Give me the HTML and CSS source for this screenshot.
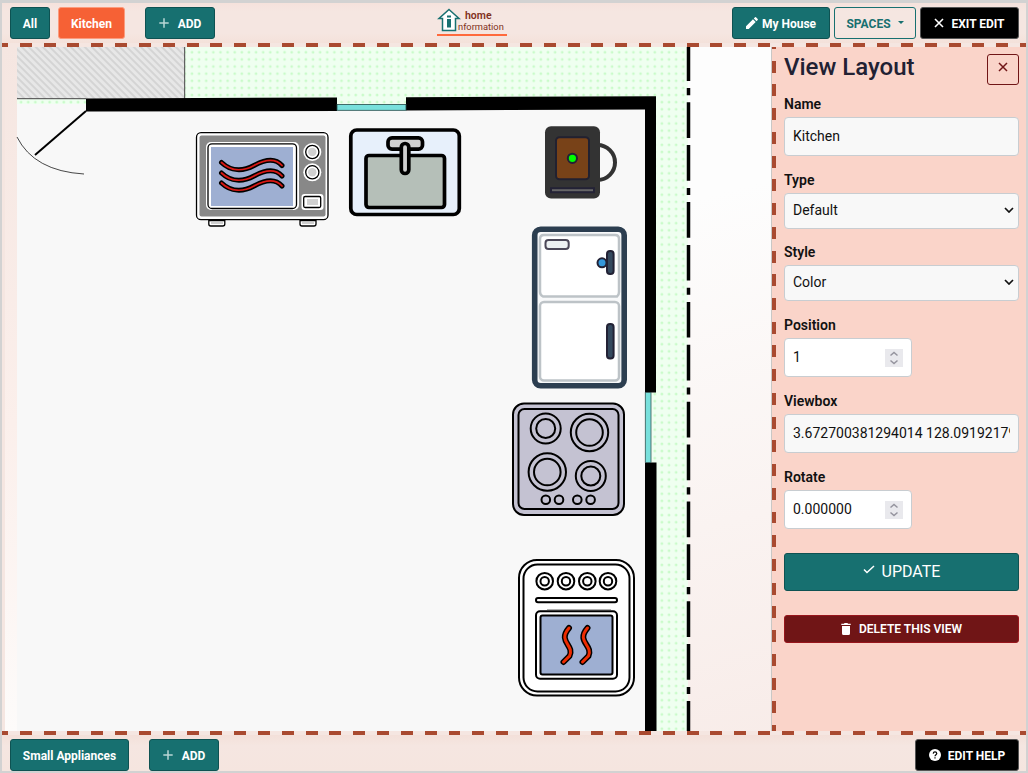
FILE: index.html
```html
<!DOCTYPE html>
<html lang="en">
<head>
<meta charset="utf-8">
<title>Home Information</title>
<link rel="stylesheet" href="styles.css">
</head>
<body>
<div class="app">
  <header class="bar top">
    <nav class="group">
      <button class="btn teal">All</button>
      <button class="btn orange">Kitchen</button>
      <button class="btn teal add"><svg width="10" height="10" viewBox="0 0 10 10"><path d="M5 .3v9.4M.3 5h9.4" stroke="#b9d6d5" stroke-width="1.5"/></svg>ADD</button>
    </nav>
    <div class="logo">
      <svg width="24" height="24" viewBox="0 0 24 24"><path d="M12 1.500 22 10.500H18.500V22.500H5.500V10.500H2Z" fill="#fff" stroke="#177070" stroke-width="1.500"/><path d="M10 7.500h4v2h-4zM10 11h4v8.500h-4z" fill="#177070"/></svg>
      <div class="words"><b>home</b><span>nformation</span></div>
    </div>
    <div class="group right">
      <button class="btn teal house"><svg width="12" height="12" viewBox="0 0 12 12"><path d="M0 12V9.300L7 2.300 9.700 5 2.700 12ZM7.800 1.500 9 .3Q9.500-.1 10 .3L11.700 2Q12.100 2.500 11.700 3L10.500 4.200Z" fill="#fff"/></svg>My House</button>
      <button class="btn outline">SPACES<i class="caret"></i></button>
      <button class="btn black exit"><svg width="10" height="10" viewBox="0 0 10 10"><path d="m1 1 8 8M9 1 1 9" stroke="#fff" stroke-width="1.600"/></svg>EXIT EDIT</button>
    </div>
  </header>
  <div class="dash"></div>
  <div class="middle">
    <main class="canvas">
      <svg width="769" height="684" viewBox="2 47 769 684">
        <defs>
          <pattern id="grass" x="188.500" y="48.700" width="7.120" height="7.120" patternUnits="userSpaceOnUse"><rect width="8" height="8" fill="#effff0"/><circle cx="3.500" cy="3.500" r="1.350" fill="#c9fbc9"/></pattern>
          <pattern id="hatch" width="4.950" height="4.950" patternUnits="userSpaceOnUse" patternTransform="rotate(-45)"><rect width="5" height="5" fill="#e7e7e7"/><path d="M2 0V5" stroke="#bdbdbd" stroke-width=".9"/></pattern>
          <linearGradient id="side" x1="690" y1="200" x2="850" y2="820" gradientUnits="userSpaceOnUse"><stop offset="0" stop-color="#fdfdfd"/><stop offset="1" stop-color="#f7e9e5"/></linearGradient>
        </defs>
        <rect x="688" y="47" width="83" height="684" fill="url(#side)"/>
        <rect x="17" y="47" width="671" height="684" fill="url(#grass)"/>
        <rect x="17" y="47" width="168" height="52" fill="url(#hatch)"/>
        <path d="M184.700 47V99M17 98.700H86" stroke="#444" fill="none"/>
        <path d="M17 104H86L645 105V731H17Z" fill="#f8f8f8"/>
        <path d="M86 98.500 337 97.500V111L86 111.500ZM406 97.200 656 96.300V392.500H645V109.500L406 110.500ZM645 462.500H656.500V731H645Z" fill="#000"/>
        <path d="M337 96h69v9h-69z" fill="url(#grass)"/>
        <rect x="337" y="104.500" width="69" height="5.800" fill="#78e0dc" stroke="#234b49" stroke-width=".8"/>
        <rect x="645.300" y="392.500" width="5.700" height="70" fill="#78e0dc" stroke="#355" stroke-width=".8"/>
        <path d="M688.500 47V731" stroke="#000" stroke-width="3.500" stroke-dasharray="35.700 7.100 7.100 7.100 35.700 7.100" stroke-dashoffset="1.700" class="fence"/>
        <path d="M86 111 35 155" stroke="#000" stroke-width="2"/><path d="M17 137Q34 171 84 174" stroke="#333" stroke-width=".9" fill="none"/>

        <g class="microwave" stroke="#000" stroke-width="1.300">
          <rect x="195" y="131" width="135" height="90" rx="6" fill="#fff" stroke="none"/>
          <rect x="196.500" y="132.700" width="131.500" height="87" rx="4.500" fill="#fff"/>
          <rect x="199.500" y="135.500" width="126" height="81" rx="2" fill="#888" stroke="none"/>
          <rect x="206" y="142" width="93" height="68" rx="5" fill="#fff" stroke="none"/>
          <rect x="208" y="143.800" width="88.500" height="64.700" rx="4" fill="#fff"/>
          <rect x="211" y="147" width="82" height="59" fill="#9eafd2" stroke="none"/>
          <g fill="#fff"><circle cx="312.300" cy="152" r="9" stroke="none"/><circle cx="312.300" cy="152" r="6.600"/><circle cx="312.300" cy="172.300" r="9" stroke="none"/><circle cx="312.300" cy="172.300" r="6.600"/><rect x="301.500" y="194" width="22" height="16" rx="3" stroke="none"/><rect x="303.700" y="196.500" width="17" height="11" rx="1.500"/><path d="M208.800 220.500h16v3.500q0 2-2 2h-12q-2 0-2-2ZM300 220.500h16v3.500q0 2-2 2h-12q-2 0-2-2Z"/></g>
          <g fill="#d0d0d0" stroke="none"><circle cx="312.300" cy="152" r="4.200"/><circle cx="312.300" cy="172.300" r="4.200"/><path d="M307 199h11v6h-11zM211 222h12v2h-12zM302 222h12v2h-12z"/></g>
          <g fill="none" stroke-linecap="round"><g stroke-width="5"><path d="M221.500 162.500C231 171.500 243 171.500 254 165.500S275 157.500 282 165.500"/><path d="M221.500 173C231 182 243 182 254 176S275 168 282 176"/><path d="M221.500 183C231 192 243 192 254 186S275 178 282 186"/></g><g stroke="#d81814" stroke-width="1.800"><path d="M221.500 162.500C231 171.500 243 171.500 254 165.500S275 157.500 282 165.500"/><path d="M221.500 173C231 182 243 182 254 176S275 168 282 176"/><path d="M221.500 183C231 192 243 192 254 186S275 178 282 186"/></g></g>
        </g>
        <g class="sink" stroke="#000" stroke-width="3.700">
          <rect x="350.800" y="130" width="108.500" height="84.500" rx="6" fill="#e7f0fb"/>
          <rect x="366" y="155.500" width="78.500" height="52" rx="3" fill="#b5bfb8"/>
          <rect x="388" y="137.800" width="34.500" height="11.400" rx="4" fill="#d0d0d0"/>
          <rect x="401.300" y="143.500" width="7.500" height="30" rx="3.700" fill="#d0d0d0"/>
        </g>
        <g class="coffee">
          <circle cx="597.500" cy="162.500" r="17.500" fill="none" stroke="#333" stroke-width="4"/>
          <rect x="545" y="126.200" width="55" height="72.300" rx="6" fill="#333"/>
          <rect x="556" y="137.200" width="33" height="42" rx="3.500" fill="#784218" stroke="#222130" stroke-width="2"/>
          <circle cx="572.400" cy="158.300" r="4.600" fill="#0f0" stroke="#232235" stroke-width="2"/>
          <rect x="551" y="188.200" width="43" height="4" fill="#666" stroke="#232235" stroke-width="2"/>
        </g>
        <g class="fridge">
          <rect x="534.700" y="229.200" width="89.500" height="156.500" rx="6" fill="#f8f9fa" stroke="#2c3e50" stroke-width="5.600"/>
          <path d="M543 296.500Q540 295 540 292V239Q540 235 544 235H615Q619 235 619 239V292Q619 295 617 296.500Z" fill="#fff" stroke="#bdc3c7" stroke-width="2.500"/>
          <rect x="540" y="302" width="79" height="78.500" rx="4" fill="#fff" stroke="#bdc3c7" stroke-width="2.500"/>
          <rect x="545.500" y="240" width="23.200" height="9" rx="3" fill="#ecf0f1" stroke="#4b4757" stroke-width="2"/>
          <rect x="607" y="251" width="6.600" height="23" rx="3" fill="#34495e" stroke="#232235" stroke-width="2"/>
          <circle cx="602" cy="262.800" r="4.500" fill="#3498db" stroke="#232235" stroke-width="2"/>
          <rect x="607" y="324" width="6.600" height="34.500" rx="3" fill="#34495e" stroke="#232235" stroke-width="2"/>
        </g>
        <g class="cooktop" fill="#c4c2d2" stroke="#000" stroke-width="2">
          <rect x="513" y="403.500" width="111" height="111.500" rx="11"/><rect x="518.500" y="409" width="100" height="100" rx="6"/>
          <circle cx="545.700" cy="428.500" r="15"/><circle cx="545.700" cy="428.500" r="9.500"/>
          <circle cx="589.500" cy="432.500" r="18.700"/><circle cx="589.500" cy="432.500" r="13.300"/>
          <circle cx="547.300" cy="472" r="18.700"/><circle cx="547.300" cy="472" r="13.300"/>
          <circle cx="590.800" cy="476" r="15"/><circle cx="590.800" cy="476" r="9.500"/>
          <circle cx="545.800" cy="499.700" r="4.300"/><circle cx="559" cy="499.700" r="4.300"/><circle cx="577.300" cy="499.700" r="4.300"/><circle cx="590.600" cy="499.700" r="4.300"/>
        </g>
        <g class="oven" fill="#fff" stroke="#000" stroke-width="2">
          <rect x="519" y="560" width="115" height="135.500" rx="18"/><rect x="523.500" y="564.500" width="106" height="127" rx="14"/>
          <circle cx="544.700" cy="581.200" r="8.300"/><circle cx="544.700" cy="581.200" r="4.200"/><circle cx="566" cy="581.200" r="8.300"/><circle cx="566" cy="581.200" r="4.200"/><circle cx="587.300" cy="581.200" r="8.300"/><circle cx="587.300" cy="581.200" r="4.200"/><circle cx="608" cy="581.200" r="8.300"/><circle cx="608" cy="581.200" r="4.200"/>
          <rect x="536" y="598" width="81" height="4.300" rx="2"/><path d="M547 609.600h64" stroke="#aaa" stroke-width="1"/>
          <rect x="536" y="611.200" width="81" height="67.600" rx="4"/><rect x="540.500" y="615.500" width="72" height="59" rx="2" fill="#9eafd2"/>
          <g fill="none" stroke-linecap="round"><path d="M569 628C557 642 575 645 569.500 656L563.500 662M587.500 628C575.500 642 593.500 645 588.500 656L582.500 662" stroke-width="6"/><path d="M569 628C557 642 575 645 569.500 656L563.500 662M587.500 628C575.500 642 593.500 645 588.500 656L582.500 662" stroke="#ee2b00" stroke-width="3"/></g>
        </g>
      </svg>
    </main>
    <aside class="panel">
      <div class="head"><h2>View Layout</h2><button class="close"><svg width="10" height="10" viewBox="0 0 10 10"><path d="m1 1 8 8M9 1 1 9" stroke="#701516" stroke-width="1.500"/></svg></button></div>
      <label>Name</label><input class="field" value="Kitchen">
      <label>Type</label><div class="field select type">Default<svg width="10" height="6" viewBox="0 0 10 6"><path d="m1 1 4 4 4-4" fill="none" stroke="#111" stroke-width="1.700"/></svg></div>
      <label>Style</label><div class="field select">Color<svg width="10" height="6" viewBox="0 0 10 6"><path d="m1 1 4 4 4-4" fill="none" stroke="#111" stroke-width="1.700"/></svg></div>
      <label>Position</label><div class="field number">1<span class="spin"><svg width="18" height="18" viewBox="0 0 18 18"><path d="m5.500 6.500 3.500-3 3.500 3M5.500 11.500l3.500 3 3.500-3" fill="none" stroke="#95949e" stroke-width="1.500"/></svg></span></div>
      <label>Viewbox</label><input class="field" value="3.672700381294014 128.09192179">
      <label>Rotate</label><div class="field number">0.000000<span class="spin"><svg width="18" height="18" viewBox="0 0 18 18"><path d="m5.500 6.500 3.500-3 3.500 3M5.500 11.500l3.500 3 3.500-3" fill="none" stroke="#95949e" stroke-width="1.500"/></svg></span></div>
      <button class="update"><svg width="12" height="9" viewBox="0 0 12 9"><path d="m1 4.500 3 3L11 1" fill="none" stroke="#fff" stroke-width="1.500"/></svg>UPDATE</button>
      <button class="delete"><svg width="10" height="12" viewBox="0 0 10 12"><path d="M.3.800H3L3.500 0h3L7 .8H9.700V2H.3ZM1 3H9V10.500Q9 12 7.500 12h-5Q1 12 1 10.500Z" fill="#fff"/></svg>DELETE THIS VIEW</button>
    </aside>
  </div>
  <div class="dash"></div>
  <footer class="bar bottom">
    <div class="group"><button class="btn teal small">Small Appliances</button><button class="btn teal add"><svg width="10" height="10" viewBox="0 0 10 10"><path d="M5 .3v9.4M.3 5h9.4" stroke="#b9d6d5" stroke-width="1.500"/></svg>ADD</button></div>
    <button class="btn black help"><svg width="12" height="12" viewBox="0 0 12 12"><circle cx="6" cy="6" r="6" fill="#fff"/><path d="M4.200 4.600Q4.400 2.900 6 2.900T7.800 4.500C7.800 5.700 6 5.800 6 7.200M6 8.200V9.500" fill="none" stroke="#000" stroke-width="1.200"/></svg>EDIT HELP</button>
  </footer>
</div>
</body>
</html>
```
FILE: styles.css
```css
* { box-sizing: border-box; }
body { margin: 0; background: #d2d2d2; font-family: Roboto, sans-serif; }
button, input { font-family: inherit; }
.app { width: 1028px; height: 773px; padding: 3px 2px 2px; display: flex; flex-direction: column; overflow: hidden; }
.bar { display: flex; justify-content: space-between; flex: none; padding: 0 7px 0 8px; }
.top { height: 40px; padding-top: 4px; background: linear-gradient(#f5e2dc, #f5e6e1 20%, #f5e6e1 75%, #f4e1da); }
.bottom { height: 36px; padding-top: 4px; background: linear-gradient(#f3e0d9, #f5e6e1 30%, #f5e5df); }
.group { display: flex; }
.right { justify-content: flex-end; gap: 4px; }
.dash { height: 4px; flex: none; background: repeating-linear-gradient(90deg, #a94a30 0 6px, #f5e6e1 6px 17.86px, #a94a30 17.86px 23.814px); }
.btn { height: 32px; padding: 1px 0 0; border: 1px solid; border-radius: 3px; font-size: 12px; font-weight: 700; line-height: 20px; display: flex; align-items: center; justify-content: center; color: #fff; white-space: nowrap; flex: none; }
.teal { background: #177070; border-color: #0e5252; width: 40px; }
.orange { background: #f66135; border-color: #fb9b7d; width: 67px; margin-left: 8px; }
.add { width: 70px; margin-left: 20px; gap: 9px; }
.small { width: 119px; }
.house { width: 98px; gap: 4px; }
.outline { width: 82px; color: #177070; border-color: #177070; background: transparent; gap: 7px; }
.caret { border: 3px solid transparent; border-top-color: #177070; border-bottom: 0; margin-bottom: 2px; }
.btn svg { margin-bottom: 1px; }
.black { background: #000; border-color: #555; }
.exit { width: 99px; gap: 7px; }
.help { width: 104px; gap: 7px; }
.logo { width: 70px; height: 29px; border-bottom: 2px solid #ff6a3d; display: flex; flex: none; margin: 0 auto 0 222px; }
.logo svg { margin: 1px 0 0; flex: none; }
.words { display: flex; flex-direction: column; margin-left: -3px; color: #803020; line-height: 11px; padding-top: 3px; }
.words b { font-size: 10.500px; font-weight: 600; margin-left: 7px; }
.words span { font-size: 9.300px; line-height: 12px; }
.middle { display: flex; flex: 1; min-height: 0; }
.canvas { width: 770px; flex: none; border-right: 1px solid #c9c7c5; background: linear-gradient(#f5e6e1, #f5e6e1) 0 0 / 3px 100% no-repeat, linear-gradient(#f5e6e1, #fbefeb 55%, #fdfbfa); }
.canvas svg { display: block; }
.panel { flex: 1; padding: 4px 7px 0 12px; background: repeating-linear-gradient(#a94a30 0 6px, #fad4c9 6px 17.770px, #a94a30 17.770px 23.724px) 0 -4px / 4px 692px no-repeat #fad4c9; }
.head { display: flex; justify-content: space-between; height: 46px; }
h2 { margin: 1px 0 0; font-size: 24px; line-height: 30px; font-weight: 500; color: #212133; }
.close { width: 32px; height: 31px; margin-top: 3px; padding: 0 0 4px; background: transparent; border: 1px solid #701516; border-radius: 3px; }
label { display: block; height: 20px; line-height: 14px; font-size: 14px; font-weight: 600; color: #111; }
.field { display: flex; align-items: center; width: 235px; height: 39px; margin: 0 0 17px; padding: 0 8px 2px; border: 1px solid #c8cdd1; border-radius: 4px; background: #f8f8f8; font-size: 14px; color: #111; }
.select { height: 36px; justify-content: space-between; padding-right: 4px; }
.type { margin-bottom: 16px; }
.number { width: 128px; background: #fff; justify-content: space-between; }
.spin { width: 18px; height: 18px; background: #e9e9ed; margin-top: 3px; }
.spin svg { display: block; }
.update, .delete { width: 235px; display: flex; align-items: center; justify-content: center; color: #fff; border: 1px solid #0e5252; border-radius: 3px; padding: 0; }
.update { height: 38px; margin-top: 24px; padding-bottom: 2px; background: #177070; font-size: 16px; gap: 7px; }
.update svg { margin-bottom: 4px; }
.delete { height: 28px; margin-top: 24px; background: #701516; border-color: #98161c; font-size: 12px; font-weight: 600; gap: 8px; }
```
